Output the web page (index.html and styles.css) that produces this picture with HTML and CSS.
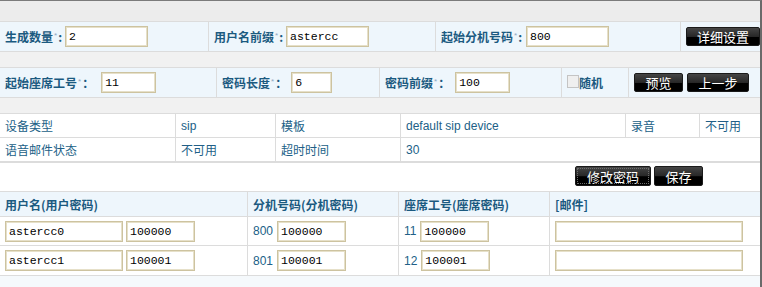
FILE: index.html
```html
<!DOCTYPE html>
<html lang="zh">
<head>
<meta charset="utf-8">
<title>批量添加</title>
<link rel="stylesheet" href="styles.css">
</head>
<body>
<div class="page">
  <div class="topbar"></div>

  <div class="frow r1">
    <div class="cell"><span class="lbl">生成数量<span class="req">*</span>:</span><input class="inp w83 ml3" value="2"></div>
    <div class="cell"><span class="lbl">用户名前缀<span class="req">*</span>:</span><input class="inp w83 ml3" value="astercc"></div>
    <div class="cell"><span class="lbl">起始分机号码<span class="req">*</span>:</span><input class="inp w83 ml4" value="800"></div>
    <div class="cell"><button class="btn b74">详细设置</button></div>
  </div>

  <div class="gap"></div>

  <div class="frow r2">
    <div class="cell"><span class="lbl">起始座席工号<span class="req">*</span>：</span><input class="inp w55 ml7" value="11"></div>
    <div class="cell"><span class="lbl">密码长度<span class="req">*</span>：</span><input class="inp w41 ml4" value="6"></div>
    <div class="cell"><span class="lbl">密码前缀<span class="req">*</span>：</span><input class="inp w55 ml5" value="100"></div>
    <div class="cell"><span class="chk"></span><span class="lbl">随机</span></div>
    <div class="cell btns"><button class="btn b49">预览</button><button class="btn b62">上一步</button></div>
  </div>

  <div class="gap"></div>

  <div class="info">
    <div class="irow first">
      <div class="icell">设备类型</div>
      <div class="icell">sip</div>
      <div class="icell">模板</div>
      <div class="icell">default sip device</div>
      <div class="icell">录音</div>
      <div class="icell">不可用</div>
    </div>
    <div class="irow">
      <div class="icell">语音邮件状态</div>
      <div class="icell">不可用</div>
      <div class="icell">超时时间</div>
      <div class="icell span3">30</div>
    </div>
  </div>

  <div class="actions">
    <button class="btn b76 focused">修改密码</button>
    <button class="btn b49">保存</button>
  </div>

  <div class="grid">
    <div class="grow ghead">
      <div class="gcell hd">用户名(用户密码)</div>
      <div class="gcell hd">分机号码(分机密码)</div>
      <div class="gcell hd">座席工号(座席密码)</div>
      <div class="gcell hd">[邮件]</div>
    </div>
    <div class="grow gdata d1">
      <div class="gcell"><input class="inp w118" value="astercc0"><input class="inp w69" value="100000"></div>
      <div class="gcell"><span class="num">800</span><input class="inp w69" value="100000"></div>
      <div class="gcell"><span class="num">11</span><input class="inp w69" value="100000"></div>
      <div class="gcell"><input class="inp w188" value=""></div>
    </div>
    <div class="grow gdata d2">
      <div class="gcell"><input class="inp w118" value="astercc1"><input class="inp w69" value="100001"></div>
      <div class="gcell"><span class="num">801</span><input class="inp w69" value="100001"></div>
      <div class="gcell"><span class="num">12</span><input class="inp w69" value="100001"></div>
      <div class="gcell"><input class="inp w188" value=""></div>
    </div>
  </div>

  <div class="foot"></div>
</div>
</body>
</html>
```

FILE: styles.css
```css
html, body {
  margin: 0;
  padding: 0;
  background: #ffffff;
}

body {
  font-family: "Liberation Sans", "Noto Sans CJK SC", sans-serif;
  font-size: 12px;
}

.page {
  width: 760px;
  height: 286px;
  border-top: 1px solid #7b7b7b;
  border-right: 2px solid #6a6a6a;
  background: #f1f1f1;
  overflow: hidden;
}

.topbar {
  height: 20px;
  background: #ececec;
}

.gap {
  height: 15px;
  background: #f1f1f1;
}

.frow {
  display: flex;
  height: 29px;
  border-top: 1px solid #dcdcdc;
  border-bottom: 1px solid #dcdcdc;
  background: #eef6fc;
}

.cell {
  display: flex;
  align-items: center;
  box-sizing: border-box;
  padding-left: 5px;
  border-left: 1px solid #dcdcdc;
}

.cell:first-child {
  border-left: 0;
}

.r1 .cell:nth-child(1) { width: 208px; }
.r1 .cell:nth-child(2) { width: 227px; }
.r1 .cell:nth-child(3) { width: 245px; }
.r1 .cell:nth-child(4) { width: 80px; }

.r2 .cell:nth-child(1) { width: 216px; }
.r2 .cell:nth-child(2) { width: 163px; }
.r2 .cell:nth-child(3) { width: 182px; }
.r2 .cell:nth-child(4) { width: 67px; }
.r2 .cell:nth-child(5) { width: 132px; }

.btns {
  gap: 4px;
}

.lbl {
  font-family: "Noto Sans CJK SC", "Liberation Sans", sans-serif;
  font-weight: bold;
  font-size: 12px;
  color: #1b5a80;
  white-space: nowrap;
}

.req {
  font-family: "Liberation Sans", sans-serif;
  font-weight: normal;
  font-size: 8px;
  color: #8ea9c2;
  vertical-align: 4px;
  margin: 0 1px 0 1px;
}

.inp {
  box-sizing: border-box;
  height: 21px;
  margin: 0;
  padding: 0 3px;
  border: 1px solid #cdc3a0;
  box-shadow: inset 0 0 0 1px #e6e0c9;
  background: #ffffff;
  font-family: "Liberation Mono", monospace;
  font-size: 11.5px;
  color: #000000;
  outline: none;
}

.w41 { width: 41px; }
.w55 { width: 55px; }
.w69 { width: 69px; }
.w83 { width: 83px; }
.w118 { width: 118px; }
.w188 { width: 188px; }

.ml3 { margin-left: 3px; }
.ml4 { margin-left: 4px; }
.ml5 { margin-left: 5px; }
.ml7 { margin-left: 7px; }

.chk {
  display: inline-block;
  box-sizing: border-box;
  width: 12px;
  height: 13px;
  border: 1px solid #c4c4c4;
  background: #efefef;
  margin-top: -3px;
}

.btn {
  box-sizing: border-box;
  height: 19px;
  padding: 0;
  margin: 0;
  border: 1px solid #1a1a1a;
  border-radius: 2px;
  background: linear-gradient(#454545 0%, #262626 52%, #000000 53%, #000000 100%);
  color: #ffffff;
  font-family: "Noto Sans CJK SC", sans-serif;
  font-size: 13px;
  line-height: 17px;
  text-align: center;
}

.b49 { width: 49px; }
.b62 { width: 62px; }
.b74 { width: 74px; }
.b76 { width: 76px; }

.focused {
  outline: 1px dotted #6e6e6e;
  outline-offset: -3px;
}

.info {
  background: #ffffff;
  border-top: 1px solid #dcdcdc;
  border-bottom: 2px solid #dcdcdc;
}

.irow {
  display: grid;
  grid-template-columns: 175px 100px 125px 225px 74px 61px;
  height: 23px;
}

.irow.first {
  border-bottom: 1px solid #dcdcdc;
}

.icell {
  display: flex;
  align-items: center;
  box-sizing: border-box;
  padding-left: 5px;
  border-left: 1px solid #dcdcdc;
  color: #215f87;
  white-space: nowrap;
}

.icell:first-child {
  border-left: 0;
}

.span3 {
  grid-column: span 3;
}

.actions {
  display: flex;
  justify-content: flex-end;
  align-items: flex-start;
  gap: 3px;
  height: 28px;
  box-sizing: border-box;
  padding-top: 3px;
  padding-right: 57px;
  background: #ffffff;
}

.actions .btn {
  height: 20px;
}

.grid {
  border-top: 1px solid #dcdcdc;
  background: #ffffff;
}

.grow {
  display: grid;
  grid-template-columns: 247px 151px 151px 211px;
  border-bottom: 1px solid #dcdcdc;
}

.ghead {
  height: 24px;
  background: #eef6fc;
}

.d1 { height: 28px; }
.d2 { height: 29px; }

.gcell {
  display: flex;
  align-items: center;
  gap: 3px;
  box-sizing: border-box;
  padding-left: 5px;
  border-left: 1px solid #dcdcdc;
}

.gcell:first-child {
  border-left: 0;
}

.hd {
  font-family: "Noto Sans CJK SC", sans-serif;
  font-weight: bold;
  color: #1b5a80;
  white-space: nowrap;
}

.num {
  color: #215f87;
  margin-right: 1px;
}

.foot {
  height: 11px;
  background: #f5f9fc;
}
```
